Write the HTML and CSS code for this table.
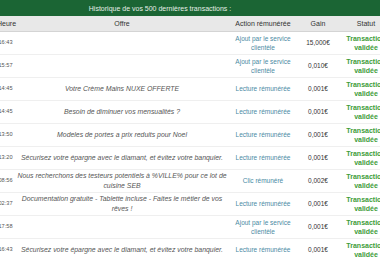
FILE: index.html
```html
<!DOCTYPE html>
<html>
<head>
<meta charset="utf-8">
<link rel="stylesheet" href="styles.css">
</head>
<body>
<table class="hist">
  <colgroup>
    <col class="c-date"><col class="c-heure"><col class="c-offre"><col class="c-action"><col class="c-gain"><col class="c-statut">
  </colgroup>
  <thead>
    <tr class="title-row"><th colspan="6">Historique de vos 500 dernières transactions :</th></tr>
    <tr class="head-row"><th>Date</th><th>Heure</th><th>Offre</th><th>Action rémunérée</th><th>Gain</th><th>Statut</th></tr>
  </thead>
  <tbody>
    <tr><td class="date">12/12/2017</td><td class="time">16:43</td><td class="offre"></td><td class="action">Ajout par le service clientèle</td><td class="gain">15,000€</td><td class="statut">Transaction validée</td></tr>
    <tr><td class="date">12/12/2017</td><td class="time">15:57</td><td class="offre"></td><td class="action">Ajout par le service clientèle</td><td class="gain">0,010€</td><td class="statut">Transaction validée</td></tr>
    <tr><td class="date">12/12/2017</td><td class="time">14:45</td><td class="offre">Votre Crème Mains NUXE OFFERTE</td><td class="action">Lecture rémunérée</td><td class="gain">0,001€</td><td class="statut">Transaction validée</td></tr>
    <tr><td class="date">12/12/2017</td><td class="time">14:45</td><td class="offre">Besoin de diminuer vos mensualités ?</td><td class="action">Lecture rémunérée</td><td class="gain">0,001€</td><td class="statut">Transaction validée</td></tr>
    <tr><td class="date">12/12/2017</td><td class="time">13:50</td><td class="offre">Modeles de portes a prix reduits pour Noel</td><td class="action">Lecture rémunérée</td><td class="gain">0,001€</td><td class="statut">Transaction validée</td></tr>
    <tr><td class="date">12/12/2017</td><td class="time">13:20</td><td class="offre">Sécurisez votre épargne avec le diamant, et évitez votre banquier.</td><td class="action">Lecture rémunérée</td><td class="gain">0,001€</td><td class="statut">Transaction validée</td></tr>
    <tr><td class="date">12/12/2017</td><td class="time">08:56</td><td class="offre">Nous recherchons des testeurs potentiels à %VILLE% pour ce lot de cuisine SEB</td><td class="action">Clic rémunéré</td><td class="gain">0,002€</td><td class="statut">Transaction validée</td></tr>
    <tr><td class="date">12/12/2017</td><td class="time">02:37</td><td class="offre">Documentation gratuite - Tablette incluse - Faites le métier de vos rêves !</td><td class="action">Lecture rémunérée</td><td class="gain">0,001€</td><td class="statut">Transaction validée</td></tr>
    <tr><td class="date">11/12/2017</td><td class="time">17:58</td><td class="offre"></td><td class="action">Ajout par le service clientèle</td><td class="gain">0,001€</td><td class="statut">Transaction validée</td></tr>
    <tr><td class="date">11/12/2017</td><td class="time">16:43</td><td class="offre">Sécurisez votre épargne avec le diamant, et évitez votre banquier.</td><td class="action">Lecture rémunérée</td><td class="gain">0,001€</td><td class="statut">Transaction validée</td></tr>
  </tbody>
</table>
</body>
</html>
```
FILE: styles.css
```css
html, body {
  margin: 0;
  padding: 0;
  overflow: hidden;
  background: #ffffff;
}
body {
  width: 380px;
  height: 260px;
  font-family: "Liberation Sans", Arial, sans-serif;
}
.hist {
  border-collapse: collapse;
  table-layout: fixed;
  width: 464px;
  margin-left: -72px;
}
.c-date { width: 69px; }
.c-heure { width: 17px; }
.c-offre { width: 216px; }
.c-action { width: 66px; }
.c-gain { width: 44px; }
.c-statut { width: 52px; }

.title-row th {
  background: #1b6534;
  color: #e6efe8;
  font-weight: normal;
  font-size: 7px;
  height: 16px;
  padding: 0;
  text-align: center;
  vertical-align: middle;
}
.head-row th {
  background: #e8e8e8;
  color: #333333;
  font-weight: normal;
  font-size: 7px;
  height: 15px;
  padding: 0;
  text-align: center;
  vertical-align: middle;
  border-bottom: 1px solid #d4d4d4;
  white-space: nowrap;
}
tbody td {
  height: 22px;
  padding: 0 4px;
  text-align: center;
  vertical-align: middle;
  border-bottom: 1px solid #efefef;
  font-size: 6.5px;
  line-height: 9.5px;
  color: #333333;
}
tbody td.time, tbody td.date {
  padding: 0;
  font-size: 5.6px;
  color: #555555;
  white-space: nowrap;
}
tbody td.offre {
  padding: 0 1px;
  font-style: italic;
  font-size: 6.9px;
  line-height: 10px;
  color: #555555;
}
tbody td.action {
  color: #4a8aa3;
}
tbody td.gain {
  color: #333333;
}
tbody td.statut {
  color: #3e9c3a;
  font-weight: bold;
  font-size: 7px;
  padding: 0;
}
```
